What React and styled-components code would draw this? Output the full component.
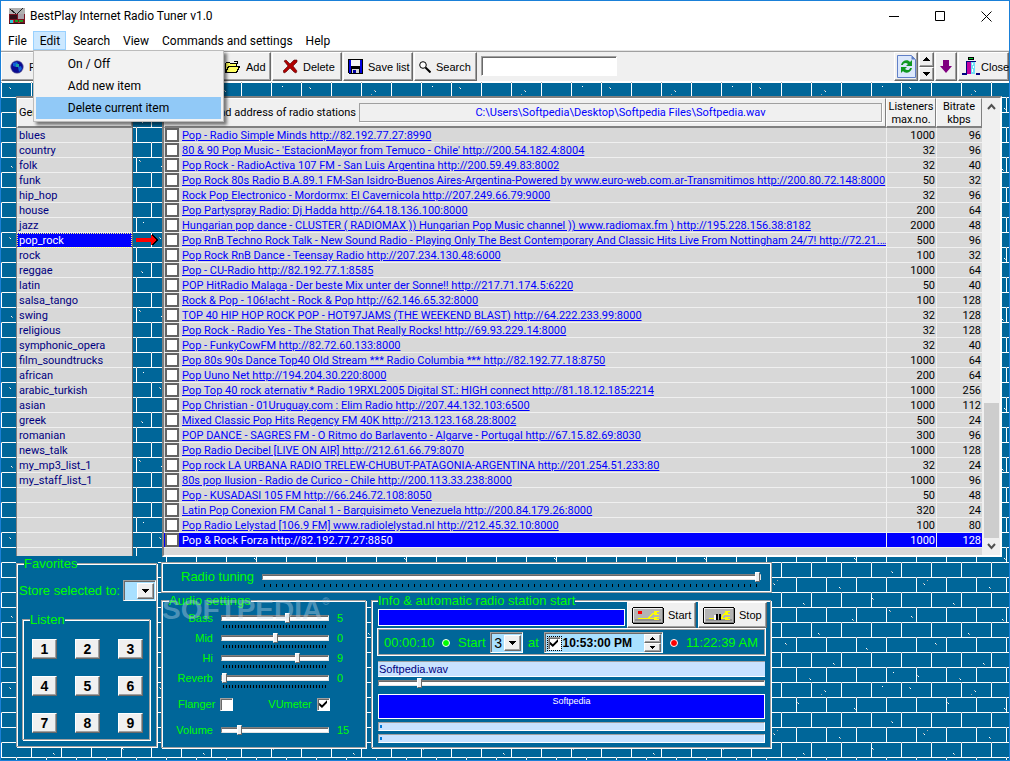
import React from "react";
import styled, { createGlobalStyle, css } from "styled-components";

const TEAL = "#006699";
const GREEN = "#00ff00";
const FACE = "#f0f0f0";
const UI = '"Liberation Sans", Arial, sans-serif';
const LIST = 'Roboto, "Liberation Sans", sans-serif';
const SHELL = 'Roboto, "Segoe UI", sans-serif';

/* Brick wall: 30px courses, offset by half a brick, sprinkled with specks */
const specks = [
  [8, 5], [9, 6], [46, 20], [47, 21], [73, 8], [74, 9], [70, 12], [103, 26], [104, 27], [131, 4], [140, 39],
  [141, 40], [22, 51], [23, 52], [26, 48], [88, 55], [89, 56], [121, 66], [122, 67], [52, 71], [53, 72], [10, 84],
  [11, 85], [101, 87], [102, 88], [138, 78], [139, 79], [67, 101], [68, 102], [34, 111], [35, 112], [115, 116],
  [116, 117], [82, 131], [83, 132], [142, 140], [16, 143], [17, 144], [58, 146], [59, 147],
];
const courses = Array.from({ length: 10 }, (_, r) =>
  `<rect x='0' y='${r * 15}' width='150' height='1' fill='white'/>` +
  Array.from({ length: 5 }, (_, c) =>
    `<rect x='${c * 30 + (r % 2) * 15}' y='${r * 15}' width='1' height='15' fill='white'/>` +
    `<rect x='${c * 30 + (r % 2) * 15}' y='${r * 15}' width='1' height='1' fill='%23a8a8a8'/>`).join("")
).join("");
const dots = specks.map(([x, y], i) =>
  `<rect x='${x}' y='${y}' width='1' height='1' fill='${i % 2 ? "white" : "%23b0b0b0"}'/>`).join("");
const BRICK = `url("data:image/svg+xml,<svg xmlns='http://www.w3.org/2000/svg' width='150' height='150' shape-rendering='crispEdges'>${courses}${dots}</svg>")`;

const Global = createGlobalStyle`
  * { box-sizing: border-box; }
  body { margin: 0; font: 11px/14px ${UI}; color: #000; background: ${TEAL}; }
  button, input, select { font: inherit; color: inherit; margin: 0; padding: 0; border-radius: 0; }
  svg { flex: none; }
`;

const raised = css`
  border: 1px solid;
  border-color: #fff #696969 #696969 #fff;
  box-shadow: inset -1px -1px 0 #a0a0a0;
  background: ${FACE};
`;
const sunken = css`
  border: 1px solid;
  border-color: #a0a0a0 #fff #fff #a0a0a0;
`;

const Window = styled.div`
  min-height: 100vh;
  display: flex;
  flex-direction: column;
  border: 1px solid #1a80d8;
  overflow: hidden;
`;
const TitleBar = styled.header`
  height: 30px;
  flex: none;
  display: flex;
  align-items: center;
  gap: 5px;
  padding-left: 8px;
  background: #fff;
  font: 12px/16px ${SHELL};
`;
const Title = styled.h1`
  margin: 0;
  flex: 1;
  font: inherit;
`;
const CaptionButtons = styled.div`
  display: flex;
`;
const CaptionButton = styled.button`
  width: 46px;
  height: 28px;
  border: 0;
  background: none;
  display: grid;
  place-items: center;
`;
const MenuBar = styled.nav`
  height: 19px;
  flex: none;
  display: flex;
  background: #fff;
  font: 12px/17px ${SHELL};
`;
const MenuSlot = styled.div`
  position: relative;
`;
const MenuButton = styled.button`
  height: 19px;
  padding: 1px 5px 0 6px;
  border: 1px solid ${(p) => (p.$open ? "#99d1ff" : "transparent")};
  background: ${(p) => (p.$open ? "#cce8ff" : "transparent")};
  white-space: nowrap;
`;
const DropMenu = styled.ul`
  position: absolute;
  z-index: 5;
  top: 19px;
  left: 0;
  width: 191px;
  margin: 0;
  padding: 2px;
  list-style: none;
  border: 1px solid #bcbcbc;
  background: #f2f2f2;
  box-shadow: 3px 3px 3px rgba(0, 0, 0, 0.5);
`;
const DropItem = styled.button`
  display: block;
  width: 100%;
  height: 22px;
  padding: 0 0 0 32px;
  border: 0;
  text-align: left;
  background: ${(p) => (p.$active ? "#91c9f7" : "transparent")};
`;
const ToolBar = styled.div`
  height: 32px;
  flex: none;
  display: flex;
  align-items: stretch;
  gap: 1px;
  padding-top: 2px;
  border-bottom: 1px solid #fff;
  background: linear-gradient(#e4e4e4 0 1px, #a0a0a0 1px 2px, ${FACE} 2px);
`;
const ToolButton = styled.button`
  ${raised}
  width: ${(p) => p.$w}px;
  flex: none;
  display: flex;
  align-items: center;
  gap: ${(p) => p.$gap ?? 5}px;
  padding: 0 0 0 ${(p) => p.$pad ?? 4}px;
  white-space: nowrap;
`;
const SearchInput = styled.input`
  width: 136px;
  height: 20px;
  margin: 4px 0 0 3px;
  ${sunken}
  box-shadow: inset 1px 1px 0 #696969;
  background: #fff;
`;
const ToolsRight = styled.div`
  margin-left: auto;
  display: flex;
  gap: 1px;
`;
const Spinner = styled.div`
  width: ${(p) => p.$w}px;
  align-self: stretch;
  display: flex;
  flex-direction: column;
`;
const SpinButton = styled.button`
  ${raised}
  flex: 1;
  min-height: 0;
  display: grid;
  place-items: center;
`;

const Client = styled.main`
  flex: 1;
  display: flex;
  flex-direction: column;
  padding: 14px 7px 11px 15px;
  background: ${TEAL} ${BRICK};
`;
const Lists = styled.div`
  display: flex;
  font-family: ${LIST};
`;
const GenrePanel = styled.section`
  width: 117px;
  flex: none;
  border: solid;
  border-width: 2px 1px 1px;
  border-color: #808080 #696969 #696969 #808080;
  background: #d8d8d8;
`;
const HeadCell = styled.div`
  height: 30px;
  display: flex;
  align-items: center;
  padding: 0 1px;
  border: solid;
  border-width: 1px 1px 2px;
  border-color: #fff #a0a0a0 #808080 #fff;
  background: ${FACE};
`;
const GenreList = styled.ul`
  margin: 0;
  padding: 0;
  list-style: none;
`;
const Genre = styled.li`
  height: 15px;
  padding-left: 2px;
  line-height: 16px;
  color: ${(p) => (p.$on ? "#fff" : "#000080")};
  background: ${(p) => (p.$on ? "#0000ff" : "transparent")};
  border-bottom: 1px solid #f0f0f0;
  outline: ${(p) => (p.$on ? "1px dotted #ffff80" : "none")};
  outline-offset: -1px;
`;
const Gutter = styled.div`
  width: 29px;
  flex: none;
  padding: 138px 0 0 2px;
`;
const StationPanel = styled.section`
  flex: 1;
  min-width: 0;
  height: 461px;
  display: flex;
  border: 2px solid;
  border-color: #808080 #fff #fff #808080;
  background: #d8d8d8;
`;
const TableWrap = styled.div`
  flex: 1;
  min-width: 0;
`;
const Table = styled.table`
  width: 100%;
  table-layout: fixed;
  border-collapse: separate;
  border-spacing: 0;
  th {
    height: 30px;
    padding: 0;
    font-weight: normal;
    line-height: 13px;
    border: solid;
    border-width: 1px 1px 2px;
    border-color: #fff #808080 #808080 #fff;
    background: ${FACE};
  }
  td {
    height: 15px;
    padding: 2px 0 0;
    line-height: 12px;
    border-bottom: 1px solid #f0f0f0;
    overflow: hidden;
    white-space: nowrap;
  }
`;
const PathHead = styled.div`
  display: flex;
  align-items: center;
  white-space: nowrap;
  padding-right: 3px;
`;
const PathLabel = styled.span`
  width: 192px;
  padding-right: 1px;
  text-align: right;
`;
const PathBox = styled.output`
  flex: 1;
  margin-left: 2px;
  height: 19px;
  border: 1px solid #a0a0a0;
  box-shadow: 1px 1px 0 #fff;
  line-height: 17px;
  text-align: center;
  color: #0000ff;
`;
const Station = styled.tr`
  background: ${(p) => (p.$on ? "#0000ff" : "transparent")};
  color: ${(p) => (p.$on ? "#fff" : "#000")};
  a { color: ${(p) => (p.$on ? "#fff" : "#0000ff")}; text-decoration: ${(p) => (p.$on ? "none" : "underline")}; }
`;
const NumCell = styled.td`
  text-align: right;
  border-left: 1px solid #f0f0f0;
  && { padding-right: 1px; }
`;
const CheckCell = styled.td`
  && { padding-top: 0; }
`;
const RowCheck = styled.input`
  appearance: none;
  display: block;
  width: 14px;
  height: 14px;
  && { margin-left: 1px; }
  border: 2px solid #646464;
  background: #fff;
`;
const ScrollBar = styled.div`
  width: 18px;
  flex: none;
  display: flex;
  flex-direction: column;
  align-items: center;
  background: ${FACE};
`;
const ScrollArrow = styled.button`
  height: 17px;
  width: 17px;
  border: 0;
  background: none;
  display: grid;
  place-items: center;
`;
const ScrollTrack = styled.div`
  flex: 1;
  width: 15px;
  display: flex;
  flex-direction: column;
  justify-content: flex-end;
`;
const ScrollThumb = styled.div`
  height: 32%;
  background: #cdcdcd;
`;

const Bottom = styled.div`
  display: flex;
  align-items: flex-start;
  gap: 3px;
  color: ${GREEN};
  font-size: 13px;
`;
const Plate = styled.div`
  position: relative;
  background: ${TEAL};
  flex: ${(p) => p.$flex ?? "none"};
  width: ${(p) => (p.$w ? p.$w + "px" : "auto")};
  min-width: 0;
`;
const Favorites = styled(Plate)`
  margin-top: -1px;
`;
const Group = styled.fieldset`
  margin: 0 1px ${(p) => (p.$nested ? 0 : 1)}px 0;
  min-width: 0;
  height: ${(p) => (p.$h ? p.$h + "px" : "auto")};
  padding: 1px 5px 6px ${(p) => p.$pad ?? 5}px;
  border: 1px solid #a0a0a0;
  box-shadow: 1px 1px 0 #fff, inset 1px 1px 0 #fff;
`;
const Legend = styled.legend`
  margin-left: ${(p) => p.$x ?? 0}px;
  padding: 0;
  height: 14px;
  line-height: 16px;
  background: ${TEAL};
`;
const StoreRow = styled.label`
  height: 21px;
  margin: 9px -5px 11px -3px;
  display: flex;
  align-items: center;
  justify-content: space-between;
  white-space: nowrap;
`;
const Combo = styled.span`
  width: 33px;
  height: 21px;
  flex: none;
  display: flex;
  ${sunken}
  box-shadow: inset 1px 1px 0 #696969;
  background: #a8e0ff;
  padding: 2px 1px 1px 2px;
  color: #000;
  font-size: 14px;
  position: relative;
  select {
    appearance: none;
    width: 100%;
    border: 0;
    background: none;
    padding-left: 1px;
    outline: none;
  }
`;
const ComboArrow = styled.span`
  ${raised}
  position: absolute;
  right: 1px;
  top: 2px;
  bottom: 1px;
  width: 17px;
  display: grid;
  place-items: center;
  pointer-events: none;
`;
const KeyPad = styled.div`
  display: grid;
  grid-template-columns: repeat(3, 25px);
  grid-auto-rows: 20px;
  gap: 17px 18px;
  padding: 12px 0 0 4px;
`;
const Key = styled.button`
  ${raised}
  color: #000;
  font: bold 14px/16px ${UI};
`;
const Controls = styled.div`
  flex: 1;
  max-width: 611px;
  margin-top: 5px;
`;
const TuningBox = styled.label`
  height: 31px;
  display: flex;
  padding: 0 10px 0 19px;
  gap: 8px;
  background: ${TEAL};
  border: 1px solid #a0a0a0;
  box-shadow: inset 1px 1px 0 #fff, inset -1px -1px 0 #fff;
  line-height: 28px;
  white-space: nowrap;
`;
const SliderBox = styled.span`
  flex: 1;
  display: flex;
  flex-direction: column;
  padding-top: ${(p) => p.$top ?? 5}px;
`;
const Slider = styled.input`
  appearance: none;
  display: block;
  width: 100%;
  height: 10px;
  background: none;
  &::-webkit-slider-runnable-track {
    height: 6px;
    border: 1px solid;
    border-color: #808080 #e3e3e3 #e3e3e3 #808080;
    background: linear-gradient(#696969 0 1px, #fff 1px);
  }
  &::-webkit-slider-thumb {
    appearance: none;
    width: 5px;
    height: 10px;
    margin-top: -3px;
    border: 1px solid;
    border-color: #fff #696969 #696969 #fff;
    background: ${FACE};
  }
`;
const Ticks = styled.span`
  height: 3px;
  margin: 2px 2px 0;
  background: repeating-linear-gradient(90deg, #000 0 1px, transparent 1px ${(p) => p.$step}px);
`;
const Pair = styled.div`
  display: flex;
  align-items: flex-start;
  gap: 4px;
`;
const AudioRow = styled.label`
  height: 20px;
  display: grid;
  grid-template-columns: 46px 108px 1fr;
  column-gap: 8px;
  font-size: 11px;
  line-height: 20px;
  > :first-child { text-align: right; }
`;
const ChecksRow = styled.div`
  height: 32px;
  display: flex;
  align-items: center;
  gap: 35px;
  padding-left: 11px;
  font-size: 11px;
  label { display: flex; align-items: center; gap: 5px; }
`;
const TickBox = styled.input`
  appearance: none;
  width: 13px;
  height: 13px;
  flex: none;
  display: grid;
  place-items: center;
  ${sunken}
  box-shadow: inset 1px 1px 0 #696969;
  background: #fff;
  color: #000;
  &:checked::before {
    content: "";
    width: 8px;
    height: 8px;
    background: #000;
    clip-path: polygon(0 35%, 35% 65%, 100% 0, 100% 35%, 35% 100%, 0 70%);
  }
`;
const InfoTop = styled.div`
  display: flex;
  gap: 2px;
  margin: -6px -2px 0 0;
`;
const Display = styled.output`
  flex: 1;
  height: 17px;
  margin-top: 7px;
  border: 1px solid #fff;
  background: #0000ff;
`;
const DeckButton = styled.button`
  ${raised}
  width: 69px;
  height: 26px;
  color: #000;
  display: flex;
  align-items: center;
  gap: 4px;
  padding-left: 4px;
  font-size: 11px;
`;
const ClockRow = styled.div`
  height: 28px;
  margin: 0 -1px 5px;
  display: flex;
  align-items: center;
  justify-content: space-between;
  padding: 1px 7px 0 6px;
  border: 1px solid #fff;
  box-shadow: inset 1px 1px 0 #a0a0a0, inset -1px -1px 0 #a0a0a0;
  white-space: nowrap;
`;
const Lamp = styled.span`
  width: 8px;
  height: 8px;
  margin: 0 3px;
  border: 1px solid #fff;
  border-radius: 50%;
  background: ${(p) => p.$c};
`;
const TimeBox = styled.span`
  width: 119px;
  height: 21px;
  display: flex;
  align-items: center;
  gap: 2px;
  padding: 1px 1px 0 3px;
  ${sunken}
  box-shadow: inset 1px 1px 0 #696969;
  background: #a8e0ff;
  color: #000;
  input[type="text"] { flex: 1; min-width: 0; border: 0; background: none; font: bold 12px/16px ${UI}; }
  input[type="checkbox"] { outline: 1px dotted #000; }
`;
const FileField = styled.output`
  display: block;
  height: 16px;
  padding-left: 1px;
  border-top: 1px solid #a0a0a0;
  border-bottom: 1px solid #fff;
  background: #c8e2ff;
  color: #000080;
  font-size: 11px;
`;
const SeekRow = styled.div`
  padding: 1px 0 6px;
`;
const Banner = styled.div`
  height: 25px;
  margin-bottom: 3px;
  border: 1px solid #fff;
  background: #0000ff;
  color: #fff;
  font-size: 9px;
  line-height: 13px;
  text-align: center;
`;
const Meter = styled.div`
  height: 9px;
  margin-bottom: 3px;
  padding: 2px 0 2px 1px;
  border: 1px solid;
  border-color: #a0a0a0 #fff #fff #a0a0a0;
  background: #c8e2ff;
  &::before { content: ""; display: block; width: 2px; height: 3px; background: #0078d7; }
`;
const Mark = styled.span`
  position: absolute;
  left: 1px;
  top: 0;
  z-index: 2;
  font: bold 28px/34px ${UI};
  color: rgba(200, 220, 235, 0.4);
  pointer-events: none;
  white-space: nowrap;
  sup { font-size: 10px; line-height: 10px; vertical-align: 14px; }
`;

const Tri = ({ up, size = 7 }) => (
  <svg width={size} height={size === 7 ? 4 : 3} viewBox="0 0 7 4" shapeRendering="crispEdges">
    <path d={up ? "M3 0h1v1h1v1h1v1h1v1H0V3h1V2h1V1h1z" : "M0 0h7v1H6v1H5v1H4v1H3V3H2V2H1V1H0z"} />
  </svg>
);
const AppIcon = () => (
  <svg width="16" height="16" viewBox="0 0 16 16" shapeRendering="crispEdges">
    <path fill="#b0b0b0" d="M0 0h16v6H0z" />
    <path stroke="#202020" strokeWidth="1" fill="none" d="M1 1l6 5M14 0L8 6" />
    <path fill="#7a1420" d="M0 6h16v10H0z" />
    <path fill="#301018" d="M1 7h7v4H1zM0 15h16v1H0z" />
    <path fill="#a8a0a8" d="M9 6h6v5H9z" />
    <path fill="#30c8d8" d="M1 12h3v3H1z" />
    <path fill="#18a020" d="M6 12h3v2H6zM10 12h4v2h-4z" />
    <path fill="#d03030" d="M4 12h1v3H4zM9 14h2v1H9z" />
  </svg>
);
const GlobeIcon = () => (
  <svg width="14" height="14" viewBox="0 0 14 14">
    <circle cx="7" cy="7" r="6.3" fill="#0a0a90" stroke="#8080a0" strokeWidth=".6" />
    <path fill="#1060d8" d="M3 3l4-1 1 2-2 3-3-1zM8 7l3-1 1 3-3 3z" />
    <path fill="#20a0a0" d="M6 4h3v3H6z" />
  </svg>
);
const FolderIcon = () => (
  <svg width="17" height="14" viewBox="0 0 17 14" shapeRendering="crispEdges">
    <path fill="#ffff60" stroke="#000" d="M1.500 12.500v-9l1-1h3l1 1h6v3h3l-3 6z" />
    <path stroke="#000" fill="none" d="M1.500 12.500l3-6h8M10 1.500h3l1 2" />
  </svg>
);
const CrossIcon = () => (
  <svg width="15" height="15" viewBox="0 0 15 15">
    <path fill="#b00000" stroke="#500000" strokeWidth=".6" d="M1 2l2-1 4 4 4-4h3v2l-4 4 4 5-1 2-2-1-4-4-4 4-2 1-1-2 5-5z" />
  </svg>
);
const DiskIcon = () => (
  <svg width="15" height="15" viewBox="0 0 15 15" shapeRendering="crispEdges">
    <path fill="#000" d="M0 0h15v15H1l-1-1z" />
    <path fill="#0000e0" d="M1 1h2v8h9V1h2v13H1z" />
    <path fill="#f4f4f4" d="M3 1h9v6H3z" />
    <path fill="#000" d="M3 9h9v5H3z" />
    <path fill="#d8d8d8" d="M4 10h7v4H4z" />
    <path fill="#0000a0" d="M5 11h3v3H5z" />
  </svg>
);
const LensIcon = () => (
  <svg width="12" height="12" viewBox="0 0 12 12">
    <circle cx="4" cy="4" r="3.3" fill="#fff" stroke="#000" />
    <path stroke="#000" strokeWidth="2" d="M6.500 6.500l5 5" />
  </svg>
);
const RefreshIcon = () => (
  <svg width="19" height="23" viewBox="0 0 19 23">
    <path fill="#dce8fc" stroke="#6080c8" d="M.5.5h14l4 4v18H.5z" />
    <path fill="#6080c8" d="M14.500.5v4h4z" />
    <path fill="#109820" d="M4 10c1-5 7-6 9-3l2-2v6H9l2-2c-2-2-5-1-5 1zM15 13c-1 5-7 6-9 3l-2 2v-6h6l-2 2c2 2 5 1 5-1z" />
  </svg>
);
const DownIcon = () => (
  <svg width="12" height="14" viewBox="0 0 12 14">
    <path fill="#800080" d="M3 0h6v6h3l-6 7-6-7h3z" />
  </svg>
);
const DoorIcon = () => (
  <svg width="18" height="19" viewBox="0 0 18 19" shapeRendering="crispEdges">
    <path fill="#000" d="M6 0h6v3H6z" />
    <path fill="#00d030" d="M7 1h4v1H7z" />
    <path fill="#000080" d="M4 4h10v12h4v2h-4V5H9v12H5v1H0v-2h4z" />
    <path fill="#c000a0" d="M5 5h4v12H5z" />
    <path fill="#70e0f8" d="M9 5h4v12H9z" />
    <path fill="#fff" d="M10 6h1v2h-1zM11 9h1v2h-1zM10 12h1v3h-1z" />
  </svg>
);
const DeckIcon = ({ stop }) => (
  <svg width="32" height="17" viewBox="0 0 32 17" shapeRendering="crispEdges">
    <path fill="#000" d="M1 0h30v1h1v15h-1v1H1v-1H0V1h1z" />
    <path fill="#f0f0f0" d="M1 1h29v1H2v13H1z" />
    <path fill="#808080" d="M30 1h1v15H1v-1h29z" />
    <path fill="#b4b4b4" d="M2 2h28v13H2z" />
    <path fill="#909090" d="M3 12h26v2H3z" />
    {stop ? (
      <>
        <path fill="#ff0" d="M6 11h5v1H6zM18 10h2v1h-2zM19 9h1v1h-1zM19 8h2v1h-2zM20 7h2v1h-2zM21 6h1v1h-1zM22 4h5v1h-2v2h2v1h-5zM18 11h4v1h-4zM22 10h5v1h-2v1h2v1h-5z" />
        <path fill="#fff" d="M11 8h2v5h-2z" />
        <path fill="#000" d="M13 7h2v6h-2zM16 7h2v6h-2z" />
      </>
    ) : (
      <>
        <path fill="#f00" d="M6 4h4v3H6z" />
        <path fill="#ff0" d="M6 11h16v1H6zM16 10h2v1h-2zM17 9h2v1h-2zM18 8h2v1h-2zM19 7h2v1h-2zM20 6h2v1h-2zM22 4h5v1h-2v2h2v1h-5zM22 10h5v1h-2v1h2v1h-5z" />
      </>
    )}
  </svg>
);
const RedArrow = () => (
  <svg width="24" height="12" viewBox="0 0 24 12" shapeRendering="crispEdges">
    <path fill="#000" d="M17 0h1v1h1v1h1v1h1v1h1v1h1v2h-1v1h-1v1h-1v1h-1v1h-2z" />
    <path fill="#f00" d="M1 4h15V1h1v1h1v1h1v1h1v1h1v2h-1v1h-1v1h-1v1h-1v1h-1V8H1z" />
  </svg>
);
const Chevron = ({ up }) => (
  <svg width="9" height="7" viewBox="0 0 9 7">
    <path fill="none" stroke="#505050" strokeWidth="2" d={up ? "M1 6l3.500-4L8 6" : "M1 1l3.500 4L8 1"} />
  </svg>
);

const genres = ["blues", "country", "folk", "funk", "hip_hop", "house", "jazz", "pop_rock", "rock", "reggae", "latin",
  "salsa_tango", "swing", "religious", "symphonic_opera", "film_soundtrucks", "african", "arabic_turkish", "asian",
  "greek", "romanian", "news_talk", "my_mp3_list_1", "my_staff_list_1", "", "", "", ""];

const stations = [
  ["Pop - Radio Simple Minds http://82.192.77.27:8990", 1000, 96],
  ["80 & 90 Pop Music - 'EstacionMayor from Temuco - Chile' http://200.54.182.4:8004", 32, 96],
  ["Pop Rock - RadioActiva 107 FM - San Luis Argentina http://200.59.49.83:8002", 32, 40],
  ["Pop Rock 80s Radio B.A.89.1 FM-San Isidro-Buenos Aires-Argentina-Powered by www.euro-web.com.ar-Transmitimos http://200.80.72.148:8000", 50, 32],
  ["Rock Pop Electronico - Mordormx: El Cavernicola http://207.249.66.79:9000", 32, 96],
  ["Pop Partyspray Radio: Dj Hadda http://64.18.136.100:8000", 200, 64],
  ["Hungarian pop dance - CLUSTER ( RADIOMAX )) Hungarian Pop Music channel )) www.radiomax.fm ) http://195.228.156.38:8182", 2000, 48],
  ["Pop RnB Techno Rock Talk - New Sound Radio - Playing Only The Best Contemporary And Classic Hits Live From Nottingham 24/7! http://72.21.…", 500, 96],
  ["Pop Rock RnB Dance - Teensay Radio http://207.234.130.48:6000", 100, 32],
  ["Pop - CU-Radio http://82.192.77.1:8585", 1000, 64],
  ["POP HitRadio Malaga - Der beste Mix unter der Sonne!! http://217.71.174.5:6220", 50, 40],
  ["Rock & Pop - 106!acht - Rock & Pop http://62.146.65.32:8000", 100, 128],
  ["TOP 40 HIP HOP ROCK POP - HOT97JAMS (THE WEEKEND BLAST) http://64.222.233.99:8000", 32, 128],
  ["Pop Rock - Radio Yes - The Station That Really Rocks! http://69.93.229.14:8000", 32, 128],
  ["Pop - FunkyCowFM http://82.72.60.133:8000", 32, 40],
  ["Pop 80s 90s Dance Top40 Old Stream *** Radio Columbia *** http://82.192.77.18:8750", 1000, 64],
  ["Pop Uuno Net http://194.204.30.220:8000", 200, 64],
  ["Pop Top 40 rock aternativ * Radio 19RXL2005 Digital ST.: HIGH connect http://81.18.12.185:2214", 1000, 256],
  ["Pop Christian - 01Uruguay.com : Elim Radio http://207.44.132.103:6500", 1000, 112],
  ["Mixed Classic Pop Hits Regency FM 40K http://213.123.168.28:8002", 500, 24],
  ["POP DANCE - SAGRES FM - O Ritmo do Barlavento - Algarve - Portugal http://67.15.82.69:8030", 300, 96],
  ["Pop Radio Decibel [LIVE ON AIR] http://212.61.66.79:8070", 1000, 128],
  ["Pop rock LA URBANA RADIO TRELEW-CHUBUT-PATAGONIA-ARGENTINA http://201.254.51.233:80", 32, 24],
  ["80s pop Ilusion - Radio de Curico - Chile http://200.113.33.238:8000", 1000, 96],
  ["Pop - KUSADASI 105 FM http://66.246.72.108:8050", 50, 48],
  ["Latin Pop Conexion FM Canal 1 - Barquisimeto Venezuela http://200.84.179.26:8000", 320, 24],
  ["Pop Radio Lelystad [106.9 FM] www.radiolelystad.nl http://212.45.32.10:8000", 100, 80],
  ["Pop & Rock Forza http://82.192.77.27:8850", 1000, 128],
];

const bands = [
  ["Bass", 5, -20, 20], ["Mid", 0, -20, 20], ["Hi", 9, -20, 20], ["Reverb", 0, 0, 40],
];

export default function App() {
  return (
    <Window>
      <Global />
      <TitleBar>
        <AppIcon />
        <Title>BestPlay Internet Radio Tuner v1.0</Title>
        <CaptionButtons>
          <CaptionButton aria-label="Minimize"><svg width="10" height="10"><path d="M0 5.500h10" stroke="#000" /></svg></CaptionButton>
          <CaptionButton aria-label="Maximize"><svg width="10" height="10"><path d="M.5.5h9v9h-9z" fill="none" stroke="#000" /></svg></CaptionButton>
          <CaptionButton aria-label="Close window"><svg width="11" height="11"><path d="M.5.5l10 10M10.500.5l-10 10" stroke="#000" /></svg></CaptionButton>
        </CaptionButtons>
      </TitleBar>
      <MenuBar>
        {["File", "Edit", "Search", "View", "Commands and settings", "Help"].map((m) => (
          <MenuSlot key={m}>
            <MenuButton $open={m === "Edit"}>{m}</MenuButton>
            {m === "Edit" && (
              <DropMenu>
                <li><DropItem>On / Off</DropItem></li>
                <li><DropItem>Add new item</DropItem></li>
                <li><DropItem $active>Delete current item</DropItem></li>
              </DropMenu>
            )}
          </MenuSlot>
        ))}
      </MenuBar>
      <ToolBar>
        <ToolButton $w={218} $pad={8}><GlobeIcon />Find</ToolButton>
        <ToolButton $w={51} $pad={3}><FolderIcon />Add</ToolButton>
        <ToolButton $w={70} $pad={10}><CrossIcon />Delete</ToolButton>
        <ToolButton $w={70}><DiskIcon />Save list</ToolButton>
        <ToolButton $w={63}><LensIcon />Search</ToolButton>
        <SearchInput aria-label="Search text" />
        <ToolsRight>
          <ToolButton $w={24} $pad={2} aria-label="Refresh"><RefreshIcon /></ToolButton>
          <Spinner $w={15}>
            <SpinButton aria-label="Previous"><Tri up /></SpinButton>
            <SpinButton aria-label="Next"><Tri /></SpinButton>
          </Spinner>
          <ToolButton $w={22} $pad={4} aria-label="Download"><DownIcon /></ToolButton>
          <ToolButton $w={51} $pad={3} $gap={1}><DoorIcon />Close</ToolButton>
        </ToolsRight>
      </ToolBar>
      <Client>
        <Lists>
          <GenrePanel>
            <HeadCell>Genre</HeadCell>
            <GenreList>
              {genres.map((g, i) => <Genre key={i} $on={g === "pop_rock"}>{g}</Genre>)}
            </GenreList>
          </GenrePanel>
          <Gutter><RedArrow /></Gutter>
          <StationPanel>
            <TableWrap>
              <Table>
                <colgroup>
                  <col width="18" /><col /><col width="50" /><col width="46" />
                </colgroup>
                <thead>
                  <tr>
                    <th colSpan={2}>
                      <PathHead>
                        <PathLabel>Name and address of radio stations</PathLabel>
                        <PathBox>C:\Users\Softpedia\Desktop\Softpedia Files\Softpedia.wav</PathBox>
                      </PathHead>
                    </th>
                    <th>Listeners<br />max.no.</th>
                    <th>Bitrate<br />kbps</th>
                  </tr>
                </thead>
                <tbody>
                  {stations.map(([name, max, rate], i) => (
                    <Station key={i} $on={i === stations.length - 1}>
                      <CheckCell><RowCheck type="checkbox" aria-label={name} /></CheckCell>
                      <td><a href="#station">{name}</a></td>
                      <NumCell>{max}</NumCell>
                      <NumCell>{rate}</NumCell>
                    </Station>
                  ))}
                </tbody>
              </Table>
            </TableWrap>
            <ScrollBar>
              <ScrollArrow aria-label="Scroll up"><Chevron up /></ScrollArrow>
              <ScrollTrack><ScrollThumb /></ScrollTrack>
              <ScrollArrow aria-label="Scroll down"><Chevron /></ScrollArrow>
            </ScrollBar>
          </StationPanel>
        </Lists>
        <Bottom>
          <Favorites $w={142}>
            <Group>
              <Legend $x={2}>Favorites</Legend>
              <StoreRow>
                Store selected to:
                <Combo>
                  <select><option></option></select>
                  <ComboArrow><Tri /></ComboArrow>
                </Combo>
              </StoreRow>
              <Group $nested>
                <Legend $x={2}>Listen</Legend>
                <KeyPad>
                  {[1, 2, 3, 4, 5, 6, 7, 8, 9].map((n) => <Key key={n}>{n}</Key>)}
                </KeyPad>
              </Group>
            </Group>
          </Favorites>
          <Controls>
            <TuningBox>
              Radio tuning
              <SliderBox $top={9}>
                <Slider type="range" min="0" max="100" defaultValue="100" />
                <Ticks $step={6} />
              </SliderBox>
            </TuningBox>
            <Pair>
              <Plate $w={206}>
                <Group $h={155}>
                  <Legend $x={2}>Audio settings</Legend>
                  {bands.map(([name, v, min, max]) => (
                    <AudioRow key={name}>
                      <span>{name}</span>
                      <SliderBox>
                        <Slider type="range" min={min} max={max} defaultValue={v} />
                        <Ticks $step={3} />
                      </SliderBox>
                      <output>{v}</output>
                    </AudioRow>
                  ))}
                  <ChecksRow>
                    <label>Flanger<TickBox type="checkbox" /></label>
                    <label>VUmeter<TickBox type="checkbox" defaultChecked /></label>
                  </ChecksRow>
                  <AudioRow>
                    <span>Volume</span>
                    <SliderBox>
                      <Slider type="range" min="0" max="100" defaultValue="15" />
                    </SliderBox>
                    <output>15</output>
                  </AudioRow>
                </Group>
                <Mark>SOFTPEDIA<sup>®</sup></Mark>
              </Plate>
              <Plate $flex="1">
                <Group $h={155} $pad={6}>
                  <Legend>Info &amp; automatic radio station start</Legend>
                  <InfoTop>
                    <Display />
                    <DeckButton><DeckIcon />Start</DeckButton>
                    <DeckButton><DeckIcon stop />Stop</DeckButton>
                  </InfoTop>
                  <ClockRow>
                    <span>00:00:10</span>
                    <Lamp $c="#00ff00" />
                    <span>Start</span>
                    <Combo>
                      <select aria-label="Start channel"><option>3</option></select>
                      <ComboArrow><Tri /></ComboArrow>
                    </Combo>
                    <span>at</span>
                    <TimeBox>
                      <TickBox type="checkbox" aria-label="Start at time" defaultChecked />
                      <input type="text" aria-label="Start time" defaultValue="10:53:00 PM" />
                      <Spinner $w={17}>
                        <SpinButton aria-label="Later"><Tri up size={5} /></SpinButton>
                        <SpinButton aria-label="Earlier"><Tri size={5} /></SpinButton>
                      </Spinner>
                    </TimeBox>
                    <Lamp $c="#ff0000" />
                    <span>11:22:39 AM</span>
                  </ClockRow>
                  <FileField>Softpedia.wav</FileField>
                  <SeekRow>
                    <Slider type="range" aria-label="Position" min="0" max="100" defaultValue="10" />
                  </SeekRow>
                  <Banner>Softpedia</Banner>
                  <Meter />
                  <Meter />
                </Group>
              </Plate>
            </Pair>
          </Controls>
        </Bottom>
      </Client>
    </Window>
  );
}
